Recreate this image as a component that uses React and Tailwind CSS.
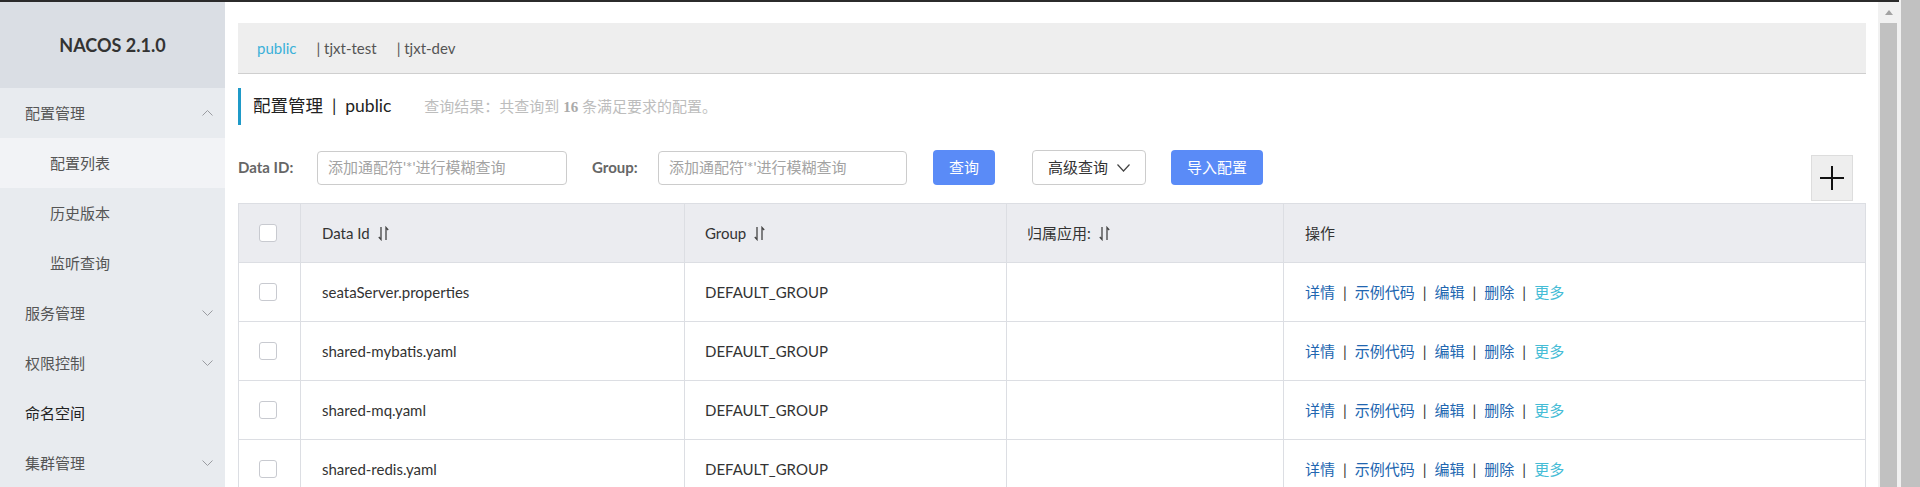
import React from 'react';

const font = { fontFamily: 'Lato, "Noto Sans CJK SC", sans-serif' };

const menu = [
  { label: '配置管理', open: true, level: 0 },
  { label: '配置列表', level: 1, active: true },
  { label: '历史版本', level: 1 },
  { label: '监听查询', level: 1 },
  { label: '服务管理', closed: true, level: 0 },
  { label: '权限控制', closed: true, level: 0 },
  { label: '命名空间', level: 0, leaf: true },
  { label: '集群管理', closed: true, level: 0 },
];

const rows = ['seataServer.properties', 'shared-mybatis.yaml', 'shared-mq.yaml', 'shared-redis.yaml'];

function Chevron({ up }) {
  return (
    <svg width="11" height="6" viewBox="0 0 11 6" className="text-[#9a9ca1]">
      <path d={up ? 'M0.5 5.5 L5.5 0.5 L10.5 5.5' : 'M0.5 0.5 L5.5 5.5 L10.5 0.5'} fill="none" stroke="currentColor" strokeWidth="1" />
    </svg>
  );
}

function SortIcon() {
  return (
    <svg width="11" height="15" viewBox="0 0 11 15" className="ml-[8px] text-[#444]">
      <path d="M3 1 V13.5 L0.8 11" fill="none" stroke="currentColor" strokeWidth="1.3" />
      <path d="M8 14 V1.5 L10.2 4" fill="none" stroke="currentColor" strokeWidth="1.3" />
    </svg>
  );
}

function Checkbox() {
  return <div className="w-[18px] h-[18px] rounded-[3px] border border-[#c8cad0] bg-white" />;
}

const cols = ['w-[62px]', 'w-[384px]', 'w-[322px]', 'w-[277px]', 'flex-1'];

export default function App() {
  return (
    <div className="w-[1920px] h-[487px] overflow-hidden flex bg-white text-[#333]" style={font}>
      <div className="w-[1899px] flex flex-col">
        <div className="h-[2px] bg-[#2b2b2b] shrink-0" />
        <div className="flex flex-1 min-h-0">
          {/* Sidebar */}
          <aside className="w-[225px] shrink-0 bg-[#e8ebef] flex flex-col">
            <div className="h-[86px] shrink-0 bg-[#dadee4] flex items-center justify-center text-[18px] font-bold text-[#333]">
              NACOS 2.1.0
            </div>
            {menu.map((m) => (
              <div
                key={m.label}
                className={`h-[50px] shrink-0 flex items-center justify-between pr-[12px] text-[15px] ${
                  m.level === 1 ? 'pl-[50px] text-[#555]' : 'pl-[25px]'
                } ${m.active ? 'bg-[#f2f3f6]' : ''} ${m.leaf ? 'text-[#222]' : m.level === 0 ? 'text-[#555]' : ''}`}
              >
                <span>{m.label}</span>
                {m.open && <Chevron up />}
                {m.closed && <Chevron />}
              </div>
            ))}
          </aside>

          {/* Main content */}
          <main className="flex-1 min-w-0 flex flex-col pl-[13px] pr-[12px]">
            <div className="mt-[21px] h-[51px] shrink-0 bg-[#eeeeee] border-b border-[#cfcfcf] flex items-center pl-[19px] text-[15px] text-[#555]">
              <span className="text-[#3bb1d9] pr-[20px]">public</span>
              <span className="pr-[20px]">| tjxt-test</span>
              <span>| tjxt-dev</span>
            </div>

            <div className="mt-[14px] h-[37px] shrink-0 border-l-[3px] border-[#1f9ac8] flex items-center pl-[12px]">
              <span className="text-[17.5px] text-[#222]">配置管理 &nbsp;|&nbsp; public</span>
              <span className="ml-[33px] text-[15px] text-[#bdbdbd]">
                查询结果：共查询到{' '}
                <b className="text-[#aaa]" style={{ fontFamily: '"Liberation Serif", serif' }}>16</b> 条满足要求的配置。
              </span>
            </div>

            <div className="mt-[25px] flex items-start shrink-0">
              <div className="h-[35px] flex items-center">
                <span className="font-bold text-[15px] text-[#666] w-[79px]">Data ID:</span>
                <div className="w-[250px] h-[34px] border border-[#cccccc] rounded-[4px] flex items-center pl-[10px] text-[15px] text-[#a3a3a3]">
                  添加通配符'*'进行模糊查询
                </div>
                <span className="ml-[25px] font-bold text-[15px] text-[#666] w-[66px]">Group:</span>
                <div className="w-[249px] h-[34px] border border-[#cccccc] rounded-[4px] flex items-center pl-[10px] text-[15px] text-[#a3a3a3]">
                  添加通配符'*'进行模糊查询
                </div>
                <button className="ml-[26px] w-[62px] h-[35px] rounded-[4px] bg-[#5a8bf7] text-white text-[15px]">查询</button>
                <button className="ml-[37px] w-[114px] h-[35px] rounded-[4px] border border-[#cccccc] bg-white text-[15px] text-[#333] flex items-center justify-center gap-[9px]">
                  高级查询
                  <svg width="13" height="8" viewBox="0 0 13 8">
                    <path d="M0.5 0.5 L6.5 7 L12.5 0.5" fill="none" stroke="#444" strokeWidth="1.2" />
                  </svg>
                </button>
                <button className="ml-[25px] w-[92px] h-[35px] rounded-[4px] bg-[#5a8bf7] text-white text-[15px]">导入配置</button>
              </div>
              <div className="ml-auto mr-[13px] mt-[5px] w-[42px] h-[46px] bg-[#eeeeee] border border-[#dddddd] flex items-center justify-center">
                <svg width="26" height="26" viewBox="0 0 26 26">
                  <path d="M13 1 V25 M1 13 H25" stroke="#111" strokeWidth="2" />
                </svg>
              </div>
            </div>

            {/* Table */}
            <div className="mt-[2px] border border-[#dcdee3] text-[15px]">
              <div className="h-[59px] bg-[#ebecf0] flex border-b border-[#dcdee3]">
                <div className={`${cols[0]} flex items-center pl-[20px] border-r border-[#dcdee3]`}>
                  <Checkbox />
                </div>
                <div className={`${cols[1]} flex items-center pl-[21px] border-r border-[#dcdee3]`}>
                  Data Id <SortIcon />
                </div>
                <div className={`${cols[2]} flex items-center pl-[20px] border-r border-[#dcdee3]`}>
                  Group <SortIcon />
                </div>
                <div className={`${cols[3]} flex items-center pl-[20px] border-r border-[#dcdee3]`}>
                  归属应用: <SortIcon />
                </div>
                <div className={`${cols[4]} flex items-center pl-[21px]`}>操作</div>
              </div>
              {rows.map((r) => (
                <div key={r} className="h-[59px] flex border-b border-[#dcdee3]">
                  <div className={`${cols[0]} flex items-center pl-[20px] border-r border-[#dcdee3]`}>
                    <Checkbox />
                  </div>
                  <div className={`${cols[1]} flex items-center pl-[21px] border-r border-[#dcdee3]`}>{r}</div>
                  <div className={`${cols[2]} flex items-center pl-[20px] border-r border-[#dcdee3]`}>DEFAULT_GROUP</div>
                  <div className={`${cols[3]} border-r border-[#dcdee3]`} />
                  <div className={`${cols[4]} flex items-center pl-[21px] text-[#2166b0]`}>
                    <span>详情</span>
                    <span className="px-[8px] text-[#333]">|</span>
                    <span>示例代码</span>
                    <span className="px-[8px] text-[#333]">|</span>
                    <span>编辑</span>
                    <span className="px-[8px] text-[#333]">|</span>
                    <span>删除</span>
                    <span className="px-[8px] text-[#333]">|</span>
                    <span className="text-[#45bcd6]">更多</span>
                  </div>
                </div>
              ))}
            </div>
          </main>

          {/* Inner scrollbar */}
          <div className="w-[21px] shrink-0 bg-[#f1f1f1] flex flex-col items-center">
            <div className="h-[21px] flex items-center justify-center">
              <svg width="8" height="5" viewBox="0 0 8 5">
                <path d="M0 5 L4 0 L8 5 Z" fill="#a3a3a3" />
              </svg>
            </div>
            <div className="w-[17px] flex-1 bg-[#c1c1c1]" />
          </div>
        </div>
      </div>
      <div className="w-[2px] bg-[#f1f1f1]" />
      <div className="w-[19px] bg-[#c1c1c1]" />
    </div>
  );
}
